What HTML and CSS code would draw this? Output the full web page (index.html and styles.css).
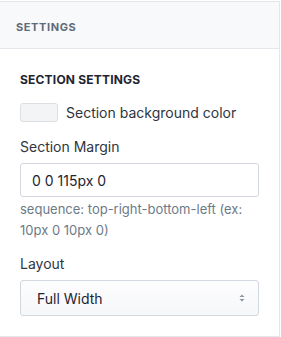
FILE: index.html
```html
<!DOCTYPE html>
<html lang="en">
<head>
  <meta charset="UTF-8">
  <title>Settings</title>
  <link rel="stylesheet" href="styles.css">
</head>
<body>
  <div class="panel">
    <div class="panel-head">SETTINGS</div>
    <div class="panel-body">
      <div class="section-title">SECTION SETTINGS</div>
      <div class="color-row">
        <span class="swatch"></span>
        <span class="color-label">Section background color</span>
      </div>
      <div class="field">
        <label class="field-label">Section Margin</label>
        <input class="text-input" type="text" value="0 0 115px 0">
        <div class="help">sequence: top-right-bottom-left (ex: 10px 0 10px 0)</div>
      </div>
      <div class="field field-layout">
        <label class="field-label">Layout</label>
        <div class="select">
          <span>Full Width</span>
          <svg class="arrows" width="8" height="10" viewBox="0 0 8 10">
            <path d="M1.5 4 L4 1.5 L6.5 4 Z" fill="#8a949e"/>
            <path d="M1.5 6 L4 8.5 L6.5 6 Z" fill="#8a949e"/>
          </svg>
        </div>
      </div>
    </div>
  </div>
</body>
</html>
```
FILE: styles.css
```css
body {
  margin: 0;
  padding-top: 1px;
  background: #fff;
  font-family: Inter, 'Noto Sans', sans-serif;
  color: #2f3540;
}
.panel {
  width: 279px;
  border-right: 1px solid #e3e6ea;
  border-top: 1px solid #e3e6ea;
  border-bottom: 1px solid #e3e6ea;
}
.panel-head {
  background: #f8f9fb;
  height: 47px;
  box-sizing: border-box;
  padding: 18px 0 0 16px;
  border-bottom: 1px solid #e3e6ea;
  font-size: 11px;
  font-weight: 700;
  letter-spacing: 0.6px;
  color: #5f6b78;
}
.panel-body {
  padding: 23px 20px 20px 20px;
}
.section-title {
  font-size: 12px;
  font-weight: 700;
  letter-spacing: 0.2px;
  color: #1e2430;
  line-height: 16px;
}
.color-row {
  display: flex;
  align-items: center;
  gap: 8px;
  margin-top: 15px;
}
.swatch {
  width: 36px;
  height: 17px;
  border: 1px solid #dcdfe3;
  border-radius: 3px;
  background: #f3f4f6;
}
.color-label {
  font-size: 14px;
  color: #2f3540;
}
.field {
  margin-top: 16px;
}
.field-layout {
  margin-top: 14px;
}
.field-label {
  display: block;
  font-size: 14px;
  line-height: 18px;
  color: #2f3540;
  margin-bottom: 7px;
}
.text-input {
  display: block;
  width: 239px;
  height: 34px;
  box-sizing: border-box;
  border: 1px solid #d3d8de;
  border-radius: 3px;
  padding: 0 11px;
  font: 14px Inter, 'Noto Sans', sans-serif;
  color: #1e2430;
  background: #fff;
}
.help {
  margin-top: 2px;
  font-size: 13px;
  line-height: 21px;
  color: #6c7a88;
  padding-right: 4px;
}
.select {
  display: flex;
  align-items: center;
  justify-content: space-between;
  width: 239px;
  height: 36px;
  box-sizing: border-box;
  border: 1px solid #d3d8de;
  border-radius: 3px;
  padding: 0 12px 0 16px;
  background: linear-gradient(#fdfdfe, #f6f7f9);
  font-size: 14px;
  color: #1e2430;
}
```
